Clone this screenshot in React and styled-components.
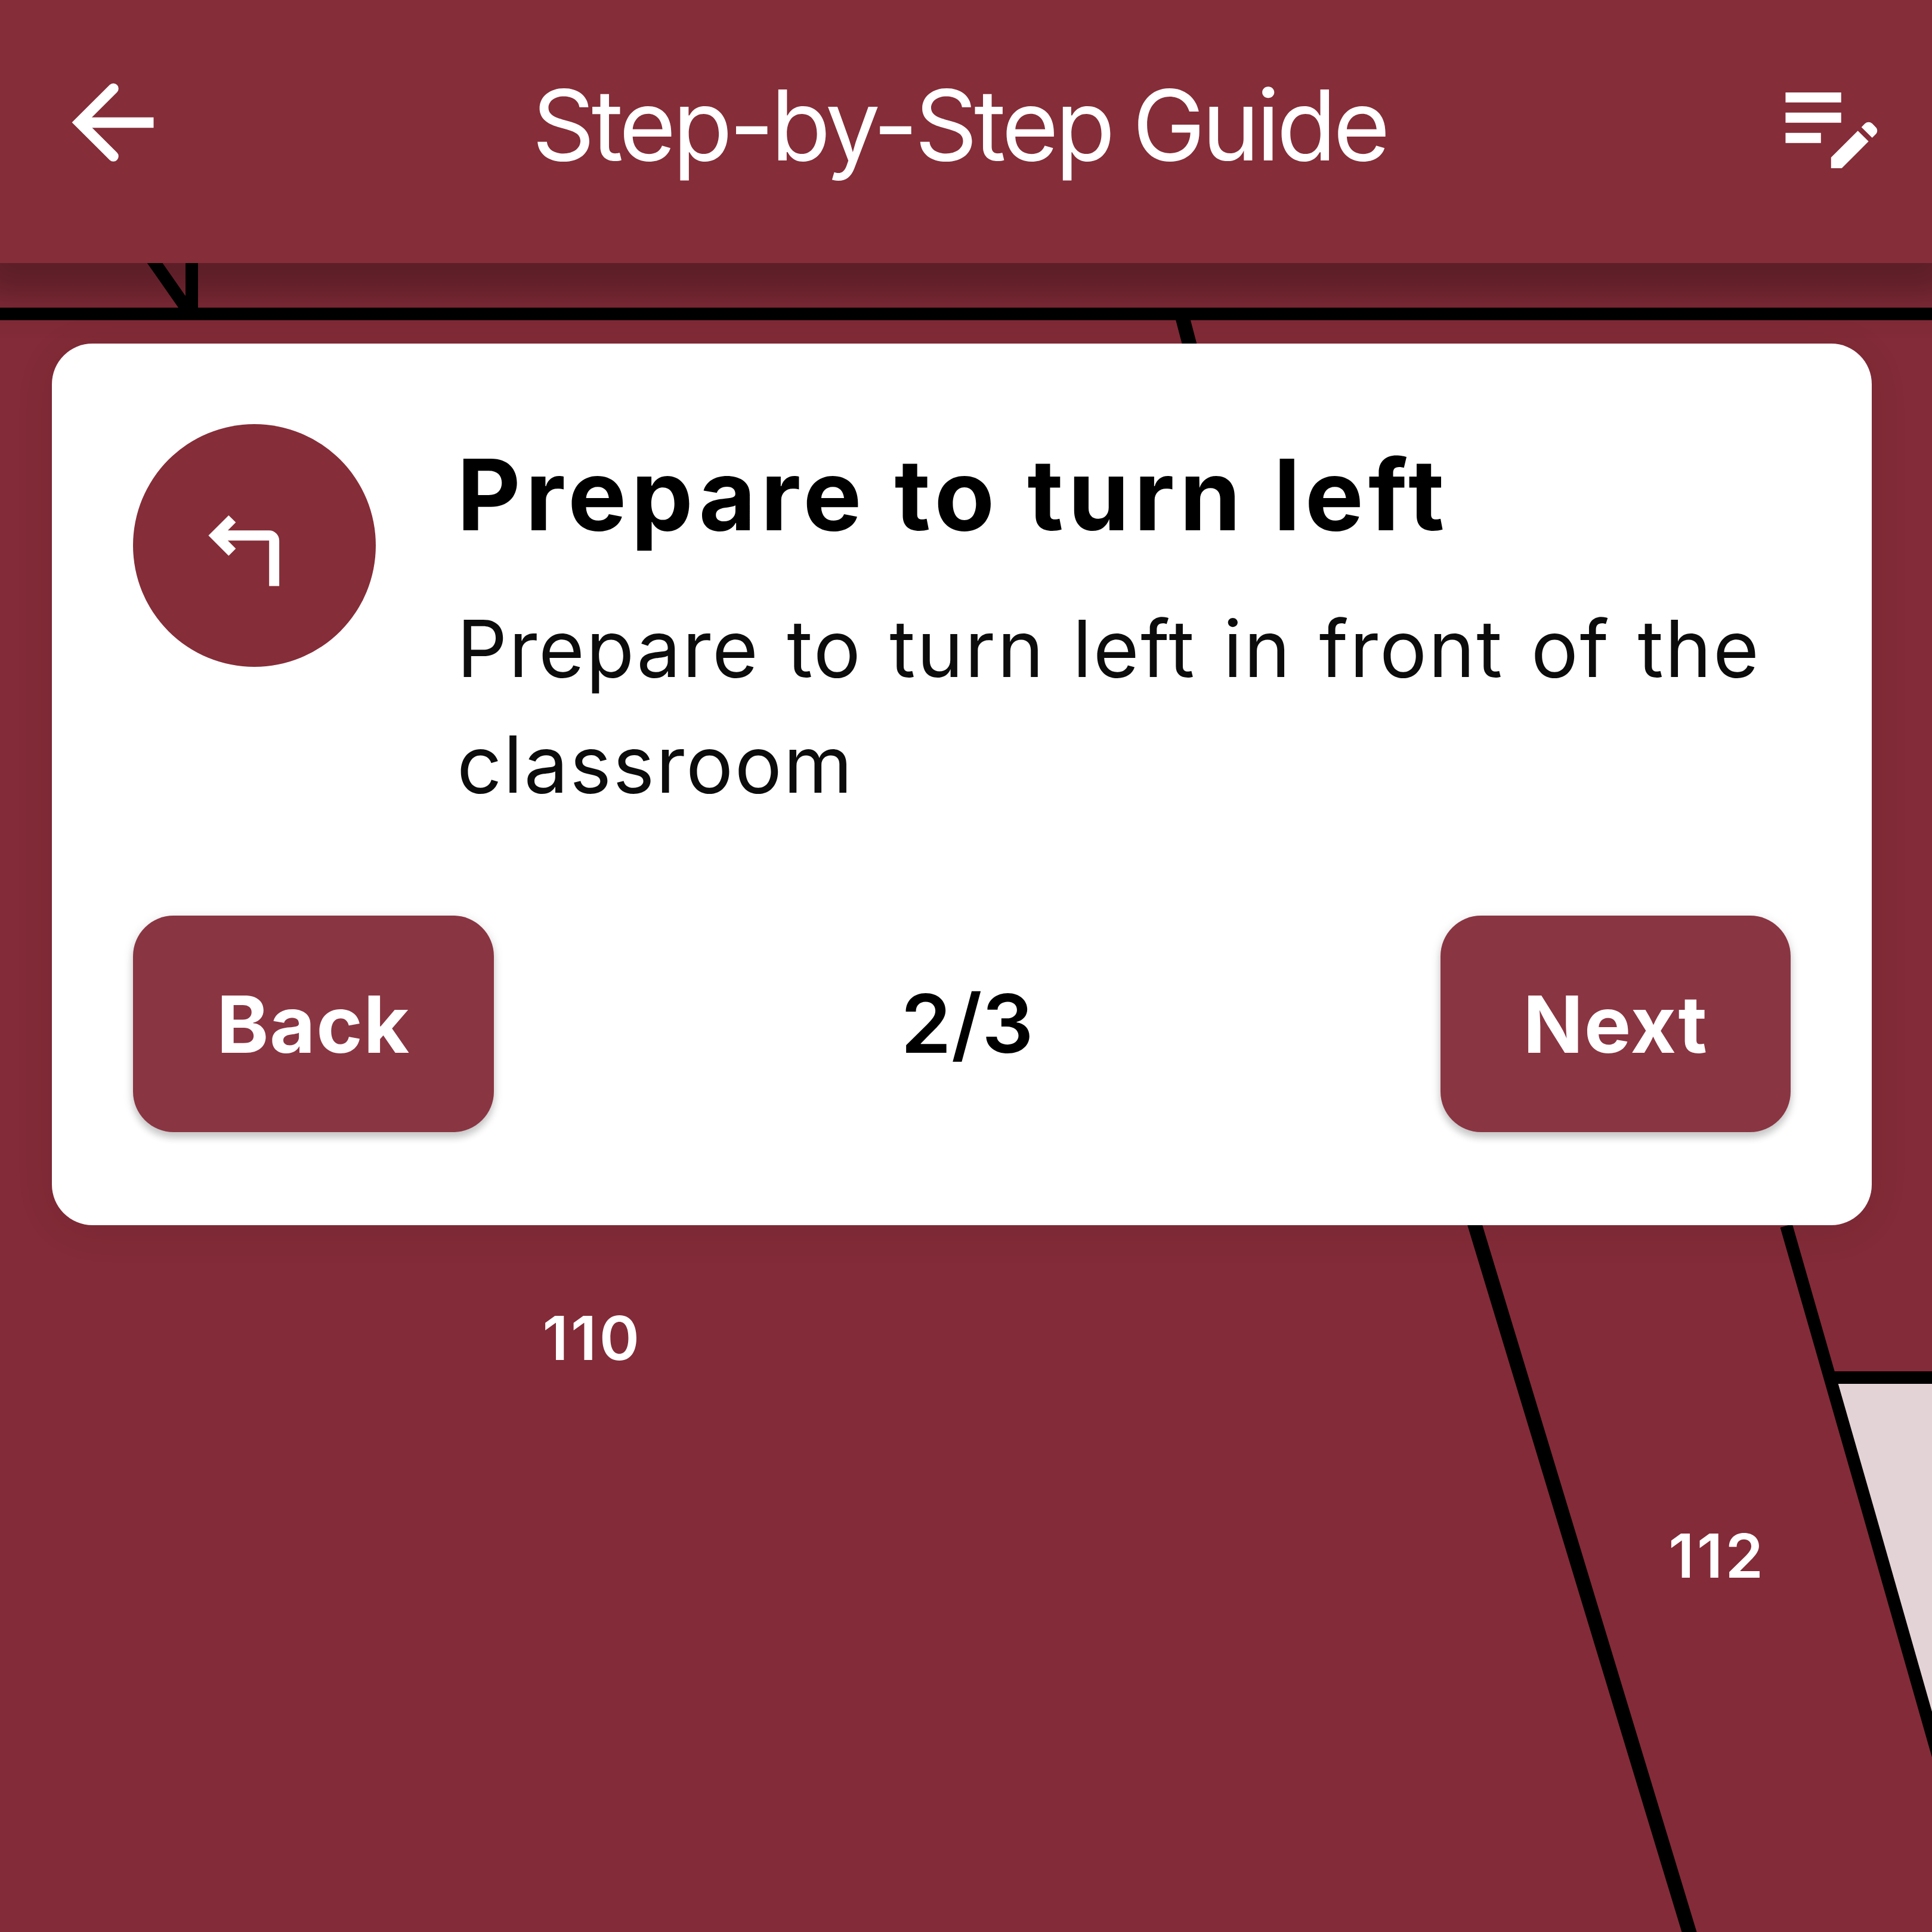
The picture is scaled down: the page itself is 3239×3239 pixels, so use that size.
import React from "react";
import styled, { createGlobalStyle } from "styled-components";

const Global = createGlobalStyle`
  * { box-sizing: border-box; }
  body { margin: 0; background: #832b38; }
`;

const Screen = styled.main`
  position: relative;
  width: 3239px;
  height: 3239px;
  overflow: hidden;
  background: #832b38;
  font-family: Inter, "Liberation Sans", sans-serif;
  display: flex;
  flex-direction: column;
`;

const FloorPlan = styled.svg`
  position: absolute;
  inset: 0;
  width: 100%;
  height: 100%;
`;

const RoomLabel = styled.span`
  position: absolute;
  left: ${(p) => p.$x}px;
  top: ${(p) => p.$y}px;
  transform: translate(-50%, -50%);
  color: #fff;
  font-size: 102px;
  line-height: 1;
  font-weight: 600;
  letter-spacing: 4.5px;
  white-space: nowrap;
`;

const Header = styled.header`
  position: relative;
  flex: none;
  height: 441px;
  padding: 0 67px 30px 87px;
  display: flex;
  align-items: center;
  justify-content: space-between;
  background: #852d38;
  box-shadow: 0 18px 60px 40px rgba(0, 0, 0, 0.3);
`;

const IconButton = styled.button`
  width: 204px;
  height: 204px;
  padding: 0;
  border: 0;
  background: none;
  display: flex;
`;

const Title = styled.h1`
  margin: 8px 42px 0 0;
  color: #fff;
  font-size: 164px;
  line-height: 200px;
  font-weight: 400;
  letter-spacing: -5.7px;
  word-spacing: -6px;
  white-space: nowrap;
`;

const Card = styled.section`
  position: relative;
  width: 3051px;
  height: 1478px;
  margin: 135px 0 0 87px;
  padding: 135px 136px;
  border-radius: 68px;
  background: #fff;
  box-shadow: 0 8px 68px rgba(0, 0, 0, 0.08);
  display: flex;
  flex-direction: column;
`;

const Instruction = styled.div`
  display: flex;
  gap: 136px;
`;

const Turn = styled.div`
  flex: none;
  width: 407px;
  height: 407px;
  padding: 102px 0 0 101px;
  border-radius: 50%;
  background: #852d38;
`;

const Copy = styled.div`
  padding-top: 12px;
`;

const StepTitle = styled.h2`
  margin: 0;
  font-size: 165px;
  line-height: 212px;
  font-weight: 700;
  letter-spacing: 7.9px;
  white-space: nowrap;
`;

const StepText = styled.p`
  margin: 55px 0 0;
  font-size: 132px;
  line-height: 194px;
  font-weight: 400;
  letter-spacing: 2.6px;
  word-spacing: 5.9px;
  color: #0c0c0c;
  white-space: nowrap;
`;

const Controls = styled.div`
  margin-top: auto;
  margin-bottom: 21px;
  display: flex;
  align-items: center;
  justify-content: space-between;
`;

const Button = styled.button`
  width: ${(p) => p.$width}px;
  height: 363px;
  padding: 0;
  border: 0;
  border-radius: 68px;
  background: #8a3542;
  color: #fff;
  font: 700 132px/1 Inter, "Liberation Sans", sans-serif;
  letter-spacing: 1.6px;
  box-shadow: 0 10px 12px rgba(0, 0, 0, 0.14), 0 4px 18px rgba(0, 0, 0, 0.14);
`;

const Counter = styled.span`
  font-size: 135.7px;
  line-height: 1;
  font-weight: 600;
`;

export default function App() {
  return (
    <>
      <Global />
      <Screen>
        <FloorPlan viewBox="0 0 3239 3239" fill="none" stroke="#000" strokeWidth="21">
          <path d="M3069 2310H3300V3124Z" fill="#e4d3d6" stroke="none" />
          <path d="M0 526.3H3239" />
          <path d="M321.5 400V526" />
          <path d="M231 400L319 526" />
          <path d="M1981 527L2025 694L2305 1500L2473 2055L2832 3239L2850 3299" strokeWidth="24" />
          <path d="M2994.7 2055L3134 2540L3239 2908L3296 3108" />
          <path d="M3068 2309.5H3239" />
        </FloorPlan>
        <RoomLabel $x={993} $y={2243}>110</RoomLabel>
        <RoomLabel $x={2879} $y={2608}>112</RoomLabel>
        <Header>
          <IconButton aria-label="Go back">
            <svg width="204" height="204" viewBox="87 104 204 204" fill="none" stroke="#fff" strokeWidth="17.5">
              <path d="M134 205.5H257.5" />
              <path d="M190 148.5L133 205.2L190 262" strokeLinecap="round" />
            </svg>
          </IconButton>
          <Title>Step-by-Step Guide</Title>
          <IconButton aria-label="Edit">
            <svg width="203.5" height="203.5" viewBox="0 0 24 24" fill="#fff">
              <path d="M3 10h11v2H3v-2zm0-2h11V6H3v2zm0 8h7v-2H3v2zm15.01-3.13.71-.71c.39-.39 1.02-.39 1.41 0l.71.71c.39.39.39 1.02 0 1.41l-.71.71-2.12-2.12zm-.71.71-5.3 5.3V21h2.12l5.3-5.3-2.12-2.12z" />
            </svg>
          </IconButton>
        </Header>
        <Card>
          <Instruction>
            <Turn>
              <svg width="203.5" height="203.5" viewBox="0 0 24 24" fill="#fff">
                <path d="M17 11v9h-2v-9H6.83l1.58 1.59L7 14l-4-4 4-4 1.41 1.41L6.83 9H15c1.1 0 2 .9 2 2z" />
              </svg>
            </Turn>
            <Copy>
              <StepTitle>Prepare to turn left</StepTitle>
              <StepText>
                Prepare to turn left in front of the
                <br />
                classroom
              </StepText>
            </Copy>
          </Instruction>
          <Controls>
            <Button $width={605}>Back</Button>
            <Counter>2/3</Counter>
            <Button $width={587}>Next</Button>
          </Controls>
        </Card>
      </Screen>
    </>
  );
}
